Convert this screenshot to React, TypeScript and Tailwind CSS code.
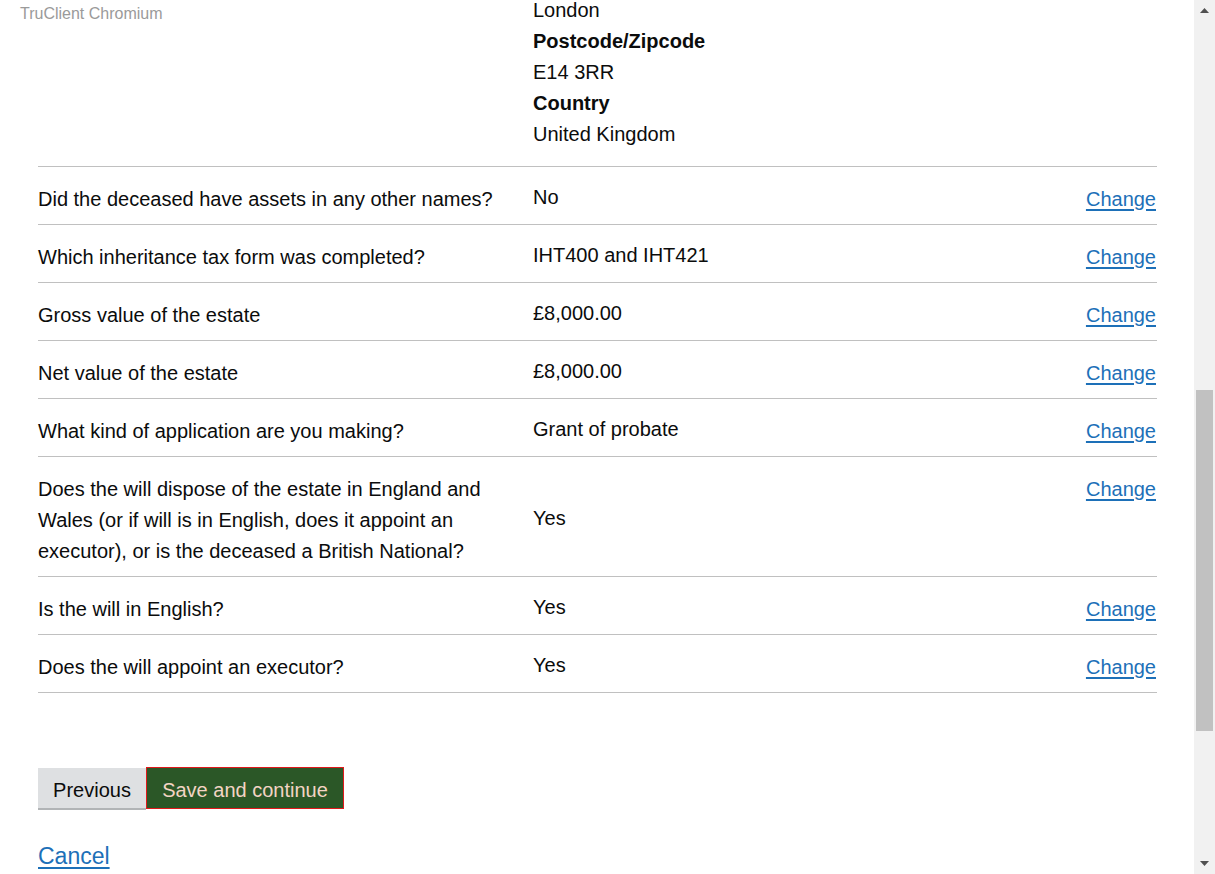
import React from 'react';

interface SummaryRow {
  key: string;
  value: string;
}

const rows: SummaryRow[] = [
  { key: 'Did the deceased have assets in any other names?', value: 'No' },
  { key: 'Which inheritance tax form was completed?', value: 'IHT400 and IHT421' },
  { key: 'Gross value of the estate', value: '£8,000.00' },
  { key: 'Net value of the estate', value: '£8,000.00' },
  { key: 'What kind of application are you making?', value: 'Grant of probate' },
  {
    key: 'Does the will dispose of the estate in England and Wales (or if will is in English, does it appoint an executor), or is the deceased a British National?',
    value: 'Yes'
  },
  { key: 'Is the will in English?', value: 'Yes' },
  { key: 'Does the will appoint an executor?', value: 'Yes' }
];

const addressLines: { text: string; bold?: boolean }[] = [
  { text: 'London' },
  { text: 'Postcode/Zipcode', bold: true },
  { text: 'E14 3RR' },
  { text: 'Country', bold: true },
  { text: 'United Kingdom' }
];

const Scrollbar: React.FC = () => (
  <div className="w-[21px] h-[874px] bg-[#f1f1f1] flex flex-col items-center shrink-0">
    <div className="h-[17px] flex items-center justify-center pt-[4px]">
      <svg width="9" height="5" viewBox="0 0 9 5">
        <path d="M0 5 L4.5 0 L9 5 Z" fill="#505050" />
      </svg>
    </div>
    <div className="flex-1 w-full px-[2px] flex flex-col">
      <div className="h-[373px]" />
      <div className="h-[341px] bg-[#c1c1c1]" />
    </div>
    <div className="h-[17px] flex items-center justify-center pb-[4px]">
      <svg width="9" height="5" viewBox="0 0 9 5">
        <path d="M0 0 L9 0 L4.5 5 Z" fill="#505050" />
      </svg>
    </div>
  </div>
);

const App: React.FC = () => {
  return (
    <div
      className="relative w-[1215px] h-[874px] overflow-hidden flex bg-white text-[#0b0c0c]"
      style={{ fontFamily: '"Liberation Sans", Arial, sans-serif' }}
    >
      <div className="absolute left-[20px] top-[4px] text-[16px] leading-[20px] text-[#9a9a9a]">
        TruClient Chromium
      </div>

      <div className="flex-1 pl-[38px] pr-[37px] flex flex-col">
        <div className="-mt-[5px] pb-[16px] border-b border-[#c0c0c0] flex">
          <div className="w-[495px] shrink-0" />
          <div className="text-[20px] leading-[31px]">
            {addressLines.map(line => (
              <div key={line.text} className={line.bold ? 'font-bold' : ''}>
                {line.text}
              </div>
            ))}
          </div>
        </div>

        {rows.map(row => (
          <div key={row.key} className="flex border-b border-[#c0c0c0] pt-[17px] pb-[9px] text-[20px] leading-[31px]">
            <div className="w-[495px] shrink-0 pr-[20px] self-start">{row.key}</div>
            <div className="flex-1 self-center -mt-[4px]">{row.value}</div>
            <a href="#" className="self-start mr-[1px] text-[#1d70b8] underline underline-offset-[3px]">
              Change
            </a>
          </div>
        ))}

        <div className="mt-[74px] flex items-start">
          <button
            type="button"
            className="mt-[1px] h-[40px] w-[108px] pt-[4px] bg-[#dee0e2] text-[20px] text-[#0b0c0c] shadow-[0_2px_0_#b1b4b6]"
          >
            Previous
          </button>
          <button
            type="button"
            className="h-[42px] w-[198px] pt-[4px] bg-[#2b5727] border border-[#e0191b] text-[20px] text-[#f3d4c4]"
          >
            Save and continue
          </button>
        </div>

        <div className="mt-[34px]">
          <a href="#" className="text-[23px] leading-[26px] text-[#1d70b8] underline underline-offset-[3px]">
            Cancel
          </a>
        </div>
      </div>

      <Scrollbar />
    </div>
  );
};

export default App;
